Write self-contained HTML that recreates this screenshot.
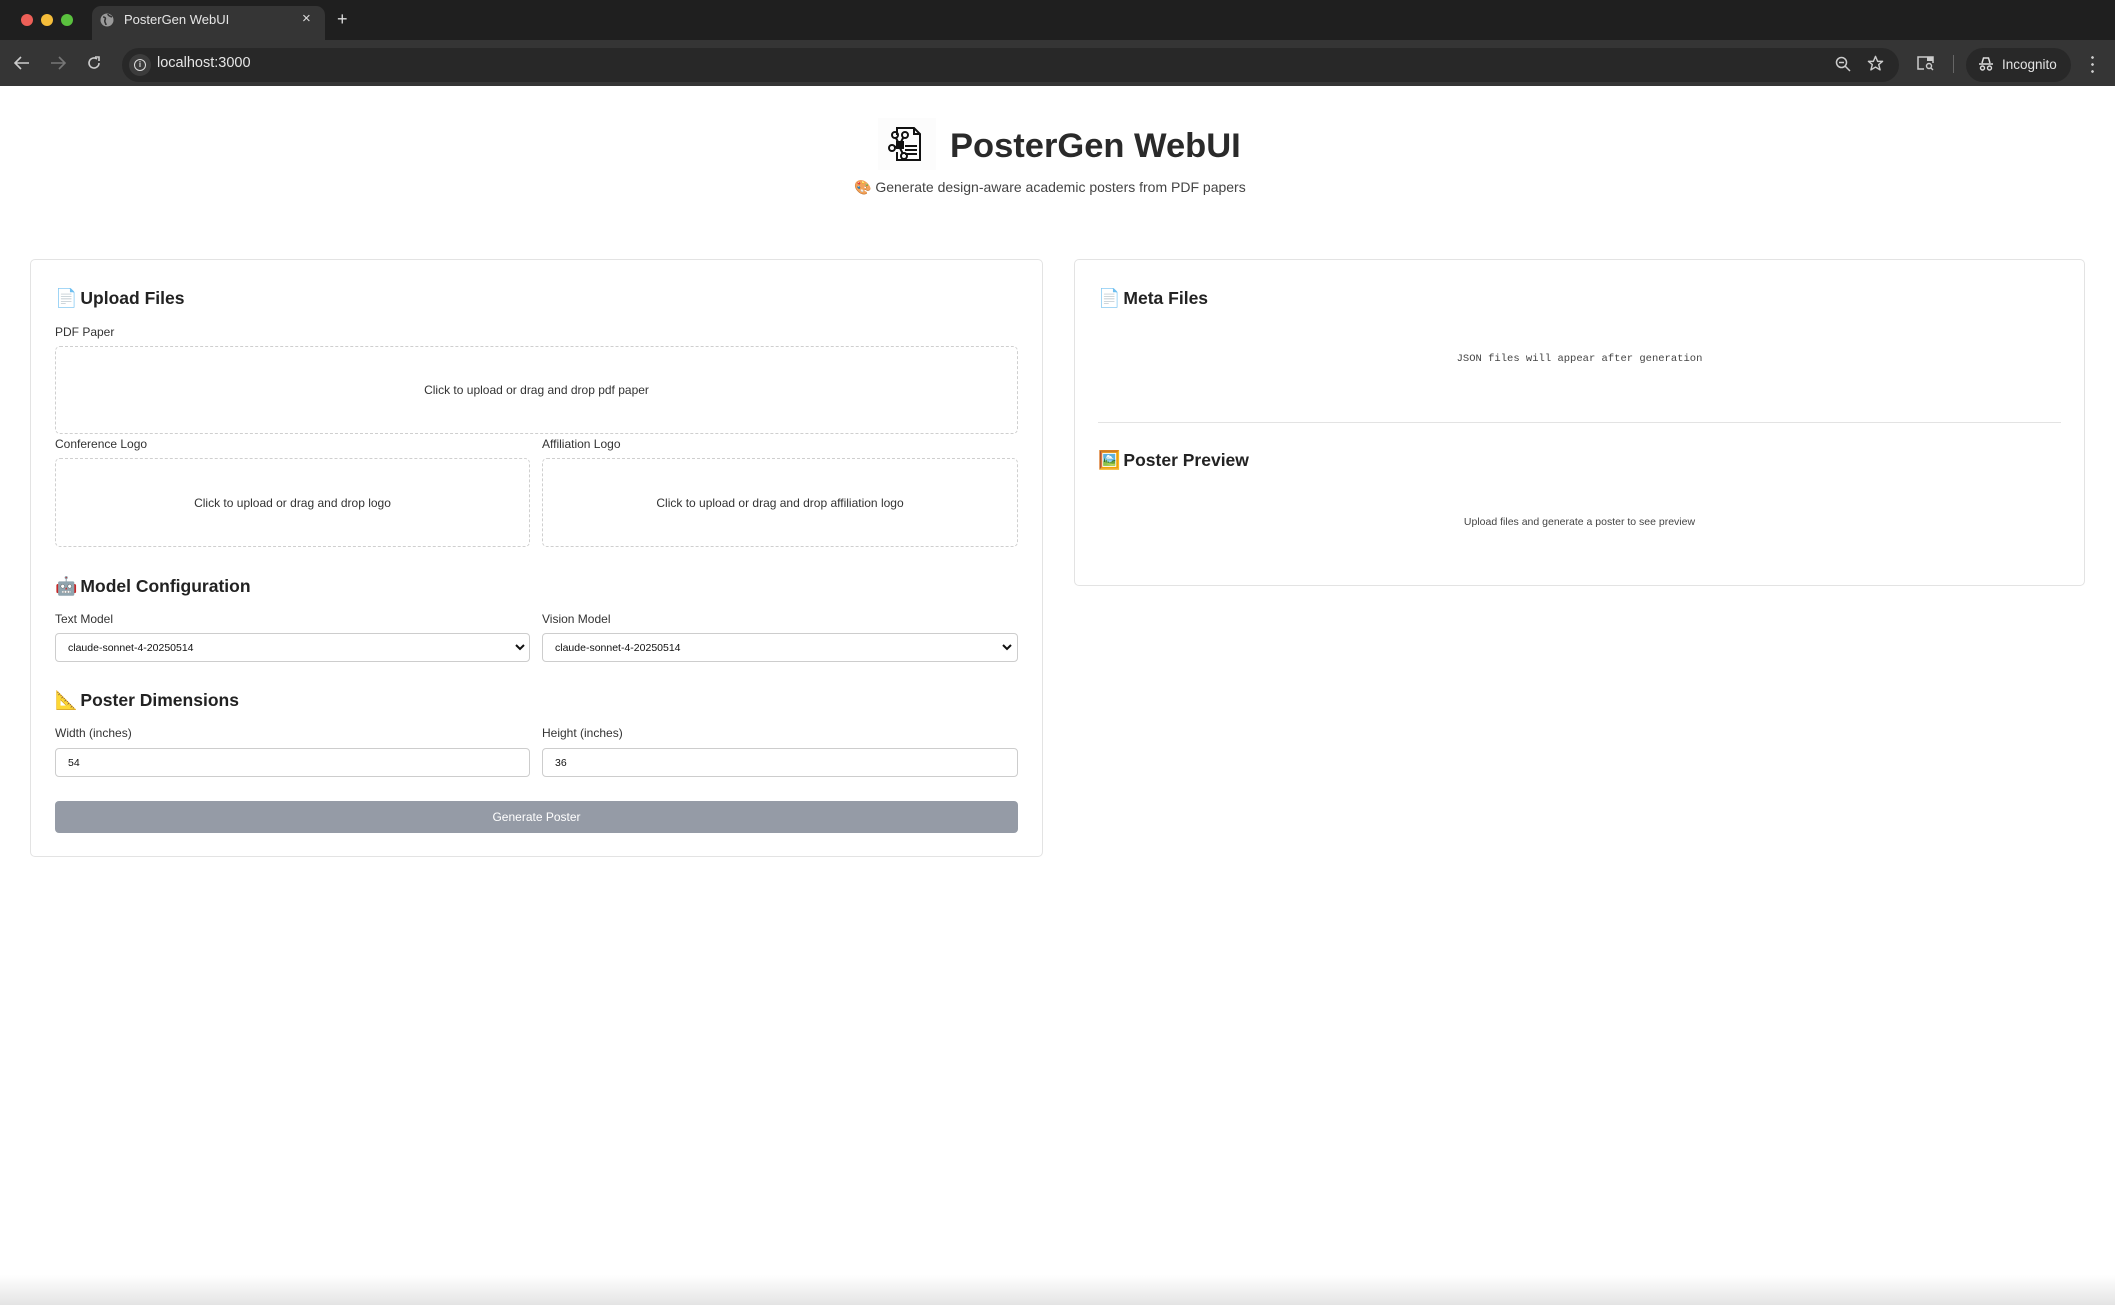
<!DOCTYPE html>
<html><head><meta charset="utf-8">
<style>
*{box-sizing:border-box;margin:0;padding:0}
body{width:2115px;height:1305px;overflow:hidden;background:#fff;font-family:"Liberation Sans",Arial,sans-serif;position:relative;color:#222}
.abs{position:absolute}
.tabbar{left:0;top:0;width:2115px;height:40px;background:#1f1f1f}
.tab{left:92px;top:6px;width:233px;height:36px;background:#353535;border-radius:9px 9px 0 0}
.toolbar{left:0;top:40px;width:2115px;height:46px;background:#353535}
.pill{left:122px;top:48px;width:1777px;height:34px;background:#282828;border-radius:17px}
.inc{left:1966px;top:48px;width:105px;height:34px;background:#282828;border-radius:17px;color:#e3e3e3;font-size:13.5px;line-height:34px;padding-left:36px}
.card{border:1px solid #e3e3e3;border-radius:5px;background:#fff}
.h{font-size:17.5px;font-weight:bold;color:#222;line-height:24px}
.h .emo{font-size:18px;margin-right:3px}
.lbl{font-size:12px;color:#333}
.drop{border:1px dashed #cfcfcf;border-radius:5px;font-size:12px;color:#333;display:flex;align-items:center;justify-content:center}
.inp{border:1px solid #cdcdcd;border-radius:4px;font-size:10.5px;color:#111;padding-left:12px;display:flex;align-items:center}
.emo{font-family:"Noto Color Emoji","DejaVu Sans",sans-serif}
</style></head><body>
<div class="abs tabbar"></div>
<div class="abs" style="left:21px;top:14px;width:12px;height:12px;border-radius:50%;background:#ed5f57"></div>
<div class="abs" style="left:41px;top:14px;width:12px;height:12px;border-radius:50%;background:#f5bd3a"></div>
<div class="abs" style="left:61px;top:14px;width:12px;height:12px;border-radius:50%;background:#5ac13e"></div>
<div class="abs tab"></div>
<svg class="abs" style="left:100px;top:13px" width="14" height="14" viewBox="0 0 14 14"><circle cx="7" cy="7" r="6.5" fill="#9a9a9a"/><path d="M3 4c2 0 3 1 2 3s1 3 1 5M8 1c0 2 2 2 4 3" stroke="#353535" stroke-width="1.6" fill="none"/></svg>
<div class="abs" style="left:124px;top:12px;font-size:13px;color:#e6e6e6">PosterGen WebUI</div>
<div class="abs" style="left:302px;top:10px;font-size:15px;color:#ddd">×</div>
<div class="abs" style="left:337px;top:9px;font-size:18px;color:#ddd">+</div>
<div class="abs toolbar"></div>
<svg class="abs" style="left:14px;top:56px" width="16" height="14" viewBox="0 0 16 14"><path d="M15 7H2M7 1L1 7l6 6" stroke="#ccc" stroke-width="1.6" fill="none"/></svg>
<svg class="abs" style="left:50px;top:56px" width="16" height="14" viewBox="0 0 16 14"><path d="M1 7h13M9 1l6 6-6 6" stroke="#777" stroke-width="1.6" fill="none"/></svg>
<svg class="abs" style="left:86px;top:55px" width="16" height="16" viewBox="0 0 16 16"><path d="M13 8a5 5 0 1 1-2-4" stroke="#ccc" stroke-width="1.6" fill="none"/><path d="M9 2h4v4" stroke="#ccc" stroke-width="1.6" fill="none"/></svg>
<div class="abs pill"></div>
<div class="abs" style="left:129px;top:54px;width:22px;height:22px;border-radius:50%;background:#3c3c3c"></div>
<div class="abs" style="left:134px;top:59px;width:12px;height:12px;border-radius:50%;border:1.4px solid #ddd;font-size:8px;color:#ddd;text-align:center;line-height:10px;font-weight:bold">i</div>
<div class="abs" style="left:157px;top:55px;font-size:14.5px;color:#e6e6e6">localhost:3000</div>
<svg class="abs" style="left:1835px;top:56px" width="16" height="16" viewBox="0 0 16 16"><circle cx="6.5" cy="6.5" r="5" stroke="#ccc" stroke-width="1.5" fill="none"/><path d="M10 10l5 5M4 6.5h5" stroke="#ccc" stroke-width="1.5"/></svg>
<svg class="abs" style="left:1867px;top:55px" width="17" height="17" viewBox="0 0 24 24"><path d="M12 2l3 7h7l-5.5 4.5 2 7.5L12 17l-6.5 4 2-7.5L2 9h7z" stroke="#ccc" stroke-width="2" fill="none" stroke-linejoin="round"/></svg>
<svg class="abs" style="left:1917px;top:55px" width="18" height="16" viewBox="0 0 18 16"><path d="M7 14H1V2h15v6" stroke="#ccc" stroke-width="1.5" fill="none"/><rect x="10" y="2" width="6" height="4" fill="#ccc"/><circle cx="12" cy="11" r="2.5" stroke="#ccc" stroke-width="1.4" fill="none"/><path d="M14 13l2 2" stroke="#ccc" stroke-width="1.4"/></svg>
<div class="abs" style="left:1953px;top:55px;width:1px;height:18px;background:#666"></div>
<div class="abs inc">Incognito</div>
<svg class="abs" style="left:1978px;top:56px" width="16" height="16" viewBox="0 0 16 16"><path d="M4 7l1.5-5h5L12 7M1 8h14" stroke="#ddd" stroke-width="1.5" fill="none"/><circle cx="4.5" cy="12" r="2" stroke="#ddd" stroke-width="1.4" fill="none"/><circle cx="11.5" cy="12" r="2" stroke="#ddd" stroke-width="1.4" fill="none"/></svg>
<div class="abs" style="left:2091px;top:54px;width:3px;height:20px;background:radial-gradient(circle,#ccc 1.2px,transparent 1.5px) 0 0/3px 7px"></div>

<!-- header -->
<div class="abs" style="left:878px;top:118px;width:58px;height:52px;background:#fcfcfc"></div>
<svg class="abs" style="left:888px;top:126px" width="36" height="36" viewBox="0 0 36 36" fill="none" stroke="#111" stroke-width="2"><path d="M9 9V2h17l6 6v26H9V26"/><path d="M26 2v6h6"/><path d="M17 20h12M17 24h12M17 28h12"/><circle cx="7" cy="9" r="3"/><circle cx="17" cy="9" r="3"/><circle cx="4" cy="22" r="3"/><circle cx="16" cy="30" r="3"/><path d="M8 12l3 6M15 12l-3 6M7 21l4-1M12 22l3 6"/><rect x="9" y="16" width="6" height="6" fill="#111"/></svg>
<div class="abs" style="left:950px;top:123px;font-size:34.5px;font-weight:bold;color:#2a2a2a;line-height:46px">PosterGen WebUI</div>
<div class="abs" style="left:854px;top:179px;font-size:14px;color:#444"><span class="emo" style="font-size:14px">🎨</span> Generate design-aware academic posters from PDF papers</div>

<!-- left card -->
<div class="abs card" style="left:30px;top:259px;width:1013px;height:598px"></div>
<div class="abs h" style="left:55px;top:286px"><span class="emo">📄</span>Upload Files</div>
<div class="abs lbl" style="left:55px;top:325px">PDF Paper</div>
<div class="abs drop" style="left:55px;top:346px;width:963px;height:88px">Click to upload or drag and drop pdf paper</div>
<div class="abs lbl" style="left:55px;top:437px">Conference Logo</div>
<div class="abs drop" style="left:55px;top:458px;width:475px;height:89px">Click to upload or drag and drop logo</div>
<div class="abs lbl" style="left:542px;top:437px">Affiliation Logo</div>
<div class="abs drop" style="left:542px;top:458px;width:476px;height:89px">Click to upload or drag and drop affiliation logo</div>

<div class="abs h" style="left:55px;top:574px"><span class="emo">🤖</span>Model Configuration</div>
<div class="abs lbl" style="left:55px;top:612px">Text Model</div>
<div class="abs inp" style="left:55px;top:633px;width:475px;height:29px">claude-sonnet-4-20250514</div>
<svg class="abs" style="left:515px;top:643px" width="10" height="8" viewBox="0 0 10 8"><path d="M1 2l4 4 4-4" stroke="#111" stroke-width="2" fill="none"/></svg>
<div class="abs lbl" style="left:542px;top:612px">Vision Model</div>
<div class="abs inp" style="left:542px;top:633px;width:476px;height:29px">claude-sonnet-4-20250514</div>
<svg class="abs" style="left:1002px;top:643px" width="10" height="8" viewBox="0 0 10 8"><path d="M1 2l4 4 4-4" stroke="#111" stroke-width="2" fill="none"/></svg>

<div class="abs h" style="left:55px;top:688px"><span class="emo">📐</span>Poster Dimensions</div>
<div class="abs lbl" style="left:55px;top:726px">Width (inches)</div>
<div class="abs inp" style="left:55px;top:748px;width:475px;height:29px">54</div>
<div class="abs lbl" style="left:542px;top:726px">Height (inches)</div>
<div class="abs inp" style="left:542px;top:748px;width:476px;height:29px">36</div>
<div class="abs" style="left:55px;top:801px;width:963px;height:32px;background:#959ba6;border-radius:4px;color:#fff;font-size:12px;text-align:center;line-height:32px">Generate Poster</div>

<!-- right card -->
<div class="abs card" style="left:1074px;top:259px;width:1011px;height:327px"></div>
<div class="abs h" style="left:1098px;top:286px"><span class="emo">📄</span>Meta Files</div>
<div class="abs" style="left:1098px;top:353px;width:963px;text-align:center;font-family:'Liberation Mono',monospace;font-size:10.5px;color:#444">JSON files will appear after generation</div>
<div class="abs" style="left:1098px;top:422px;width:963px;height:1px;background:#e3e3e3"></div>
<div class="abs h" style="left:1098px;top:448px"><span class="emo">🖼️</span>Poster Preview</div>
<div class="abs" style="left:1098px;top:516px;width:963px;text-align:center;font-size:10.5px;color:#444">Upload files and generate a poster to see preview</div>

<div class="abs" style="left:0;top:1275px;width:2115px;height:30px;background:linear-gradient(#fff,#e4e4e4)"></div>
</body></html>
